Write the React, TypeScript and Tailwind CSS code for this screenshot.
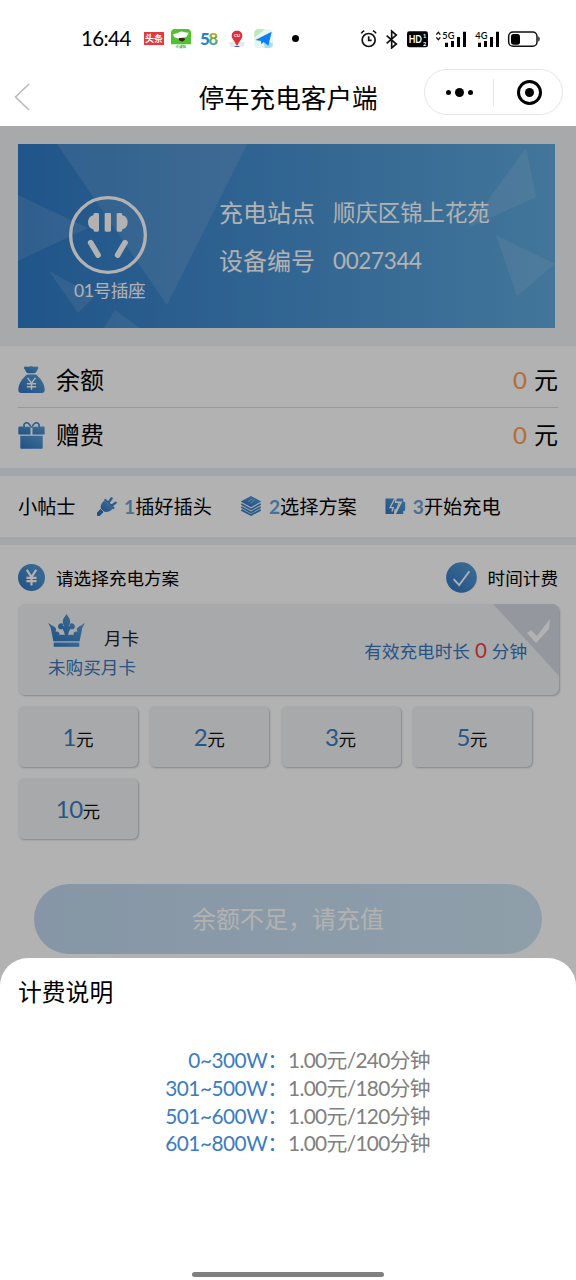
import { ReactNode } from "react";
import clsx from "clsx";

interface Rate {
  range: string;
  price: string;
}

const amounts: number[] = [1, 2, 3, 5, 10];

const rates: Rate[] = [
  { range: "0~300W", price: "1.00元/240分钟" },
  { range: "301~500W", price: "1.00元/180分钟" },
  { range: "501~600W", price: "1.00元/120分钟" },
  { range: "601~800W", price: "1.00元/100分钟" },
];

// shared gradient for the blue icons
const BlueGradient: React.FC<{ id: string }> = ({ id }) => (
  <defs>
    <linearGradient id={id} x1="0" y1="1" x2="1" y2="0">
      <stop offset="0" stopColor="#2f74bf" />
      <stop offset="1" stopColor="#5a9fd6" />
    </linearGradient>
  </defs>
);

const BagIcon = () => (
  <svg viewBox="0 0 80 82" className="h-[27px] w-[27px]">
    <BlueGradient id="bag" />
    <path
      d="M18 3c5-4 9 1 14-1 5-2 9-2 13 0 5 2 10-3 15 1 3 4-3 8-5 14-1 4-4 5-8 5H31c-4 0-7-1-8-5C22 11 15 8 18 3z"
      fill="url(#bag)"
    />
    <path
      d="M27 26h26c13 10 27 27 27 46 0 7-3 10-9 10H9c-6 0-9-3-9-10 0-19 14-36 27-46z"
      fill="url(#bag)"
    />
    <path
      d="M28 36l12 16 12-16M40 52v20M26 54h28M26 63h28"
      fill="none"
      stroke="#fff"
      strokeWidth="4.5"
    />
  </svg>
);

const GiftIcon = () => (
  <svg viewBox="0 0 80 82" className="h-[27px] w-[27px]">
    <BlueGradient id="gift" />
    <path
      d="M3 14h34v24H3a3 3 0 0 1-3-3V17a3 3 0 0 1 3-3zM43 14h34a3 3 0 0 1 3 3v18a3 3 0 0 1-3 3H43z"
      fill="url(#gift)"
    />
    <path d="M6 42h68v36a3 3 0 0 1-3 3H9a3 3 0 0 1-3-3z" fill="url(#gift)" />
    <path
      d="M38 17C37 7 27-1 20 4c-5 4-3 9-1 12M42 17C43 7 53-1 60 4c5 4 3 9 1 12"
      fill="none"
      stroke="#4787c6"
      strokeWidth="5"
    />
    <path
      d="M20 16c4-4 12-5 17 0M60 16c-4-4-12-5-17 0"
      fill="none"
      stroke="#fff"
      strokeWidth="2"
    />
  </svg>
);

const PlugIcon = () => (
  <svg viewBox="0 0 60 60" className="h-5 w-5">
    <BlueGradient id="plug" />
    <path d="M22 14C10 22 8 36 15 43c8 8 22 6 32-5z" fill="url(#plug)" />
    <path
      d="M25 12l24 24M34 20L44 7M43 30l13-10"
      stroke="#3f86c9"
      strokeWidth="7"
      strokeLinecap="round"
    />
    <path d="M17 41l-6 6" stroke="#2f74bf" strokeWidth="10" />
    <path d="M13 46l-8 8" stroke="#2f74bf" strokeWidth="13" strokeLinecap="round" />
    <path d="M12 39l9 9" stroke="#fff" strokeWidth="2.5" />
  </svg>
);

const LayersIcon = () => (
  <svg viewBox="0 0 66 62" className="h-5 w-[22px]">
    <BlueGradient id="layers" />
    <path d="M33 0l32 17-32 18L1 17z" fill="url(#layers)" />
    <path
      d="M3 25l30 17 30-17M3 34l30 17 30-17M3 43l30 16 30-16"
      fill="none"
      stroke="#3e82c4"
      strokeWidth="5.5"
    />
    <path d="M24 17l14-8M32 24l12-14" stroke="#9cc3e6" strokeWidth="2.5" />
  </svg>
);

const BatteryIcon = () => (
  <svg viewBox="0 0 64 62" className="h-5 w-[21px]">
    <BlueGradient id="battery" />
    <path d="M1 8h55v9l6 2v26l-6 2v9H1z" fill="url(#battery)" />
    <path
      d="M34 0L15 36h10l-4 12M35 2l-3 18h12L29 60l2-20"
      fill="none"
      stroke="#fff"
      strokeWidth="4"
    />
    <path d="M35 19h15L29 60" fill="none" stroke="#fff" strokeWidth="4" />
  </svg>
);

const YenIcon = () => (
  <svg viewBox="0 0 80 80" className="h-[27px] w-[27px]">
    <BlueGradient id="yen" />
    <circle cx="40" cy="40" r="40" fill="url(#yen)" />
    <path
      d="M26 17l14 22 14-22M40 38v26M25 41h30M25 51h30"
      fill="none"
      stroke="#fff"
      strokeWidth="6.5"
    />
  </svg>
);

const CheckIcon = () => (
  <svg viewBox="0 0 94 94" className="h-[31px] w-[31px]">
    <BlueGradient id="check" />
    <circle cx="47" cy="47" r="46.5" fill="url(#check)" />
    <path d="M23 52l17 18 31-42" fill="none" stroke="#fff" strokeWidth="5.5" />
  </svg>
);

const CrownIcon = () => (
  <svg viewBox="0 0 110 98" className="h-[33px] w-[37px]">
    <BlueGradient id="crown" />
    <g fill="url(#crown)">
      <path d="M55 0c5 8 11 14 11 22 0 6-3 10-5 14 4 1 5-3 3-6 7-6 17 0 16 8-1 8-9 9-13 6-3 6-6 9-7 21H50c-1-12-4-15-7-21-4 3-12 2-13-6-1-8 9-14 16-8-2 3-1 7 3 6-2-4-5-8-5-14 0-8 6-14 11-22z" />
      <path d="M0 26l13 9c10 4 14 10 9 17 9-1 14 4 12 11 8-3 14 0 21 2 7-2 13-5 21-2-2-7 3-12 12-11-5-7-1-13 9-17l13-9-8 15-8 40H16L8 41z" />
      <path d="M17 85h76v12H17z" />
    </g>
  </svg>
);

const SocketIcon = () => (
  <svg viewBox="0 0 240 240" className="h-20 w-20" fill="#fff">
    <circle cx="120" cy="120" r="112" fill="none" stroke="#fff" strokeWidth="10" />
    <rect x="110" y="54" width="19" height="56" rx="4" />
    <path d="M80 54h9q4 0 4 4v48q0 4-4 4h-9q-4 0-4-7-15-2-16-21 1-18 16-21 0-7 4-7z" />
    <path d="M159 54h-9q-4 0-4 4v48q0 4 4 4h9q4 0 4-7 15-2 16-21-1-18-16-21 0-7-4-7z" />
    <path d="M68 143l22 37M171 143l-22 37" stroke="#fff" strokeWidth="17" strokeLinecap="round" />
  </svg>
);

const StatusBar = () => (
  <div className="flex h-[68px] shrink-0 items-center pt-[9px] pl-[81px]">
    <span className="w-[50px] whitespace-nowrap text-[20.5px] leading-none tracking-[-0.6px]">
      16:44
    </span>
    <span className="ml-[13px] flex h-[13px] w-5 items-center justify-center whitespace-nowrap bg-[#e8383d] text-[9px] font-bold leading-none text-white">
      头条
    </span>
    <svg viewBox="0 0 60 60" className="ml-[7px] h-5 w-5">
      <rect width="60" height="60" rx="12" fill="#fff" />
      <path d="M12 0h36q12 0 12 12v34H0V12Q0 0 12 0z" fill="#4ec22f" />
      <path d="M6 16l14-4q10-8 20-2l13 1-6 12-11 4-7 6-10-5-9-3z" fill="#fff" />
      <path d="M23 27l17-1 2 6-8 6-10-4z" fill="#3c2415" />
      <text x="30" y="57" textAnchor="middle" fontSize="11" fontWeight="700" fill="#2c9c35">
        小虎队
      </text>
    </svg>
    <span className="ml-[9px] flex w-[17px] text-[17px] font-black leading-none tracking-[-1.5px]">
      <span className="text-[#2785c6]">5</span>
      <span className="bg-linear-to-b from-[#f08a24] via-[#6cb033] to-[#2f9fd0] bg-clip-text pr-[2px] text-transparent">
        8
      </span>
    </span>
    <svg viewBox="0 0 54 54" className="ml-[11px] h-[18px] w-[18px]">
      <path d="M2 36h50l-6 14H8z" fill="#e5e9f1" />
      <path d="M27 2c10 0 16 6 16 15 0 10-10 16-14 28h-4C21 33 11 27 11 17 11 8 17 2 27 2z" fill="#df3038" />
      <text x="27" y="22" textAnchor="middle" fontSize="13" fontWeight="700" fill="#fff">
        CU
      </text>
      <path d="M18 51q9-8 18 0z" fill="#335fb6" />
    </svg>
    <svg viewBox="0 0 60 60" className="ml-[8px] h-5 w-5">
      <rect x="1" y="1" width="56" height="56" rx="12" fill="#e6f7ee" />
      <path d="M1 26V13Q1 1 13 1h20z" fill="#b9ecb4" />
      <path d="M28 36l28 6v10q-4 6-12 5H32z" fill="#a6def8" />
      <path d="M4 33L53 8 43 50 29 39 22 46l-1-10z" fill="#117df3" />
    </svg>
    <span className="ml-[18px] h-[7px] w-[7px] rounded-full bg-black" />
    <svg viewBox="0 0 540 60" className="ml-[61px] h-5 w-[180px] shrink-0">
      <g fill="none" stroke="#111" strokeWidth="5">
        <circle cx="26" cy="33" r="19.5" />
        <path d="M26 22v12h9M4 13q3-6 9-8M39 5q6 2 9 8" />
        <path d="M80 20l29 25-14 12V6l14 12-29 25" />
      </g>
      <rect x="141" y="7" width="63" height="48" rx="7" fill="#000" />
      <text x="146" y="42" fontSize="32" fontWeight="700" fill="#fff" textLength="40" lengthAdjust="spacingAndGlyphs">
        HD
      </text>
      <text x="189" y="28" fontSize="17" fontWeight="700" fill="#fff">1</text>
      <text x="189" y="50" fontSize="17" fontWeight="700" fill="#fff">2</text>
      <path d="M229 17l6-7 6 7M229 25l6 7 6-7" fill="none" stroke="#111" strokeWidth="4" />
      <text x="247" y="30" fontSize="31" fontWeight="600" textLength="36" lengthAdjust="spacingAndGlyphs">
        5G
      </text>
      <path d="M255 41h9v13h-9zM273 36h9v18h-9zM291 24h9v30h-9zM309 8h9v46h-9z" />
      <text x="346" y="30" fontSize="31" fontWeight="600" textLength="36" lengthAdjust="spacingAndGlyphs">
        4G
      </text>
      <path d="M354 41h9v13h-9zM372 36h9v18h-9zM390 24h9v30h-9zM408 8h9v46h-9z" />
      <rect x="446" y="9" width="85" height="43" rx="13" fill="none" stroke="#111" strokeWidth="4.5" />
      <rect x="453" y="15" width="27" height="32" rx="8" />
      <path d="M535 22q4 2 4 8t-4 8z" />
    </svg>
  </div>
);

const NavBar = () => (
  <div className="relative flex h-[58px] shrink-0 items-center">
    <svg viewBox="0 0 16 28" className="ml-[14px] h-7 w-4">
      <path d="M15 1L1.5 14 15 27" fill="none" stroke="#bcbcbc" strokeWidth="1.7" />
    </svg>
    <h1 className="absolute inset-x-0 top-[14px] text-center text-[25.6px] leading-[32px]">
      停车充电客户端
    </h1>
    <div className="relative mr-[13px] mb-[10px] ml-auto flex h-[46px] w-[139px] items-center rounded-full border border-[#e6e6e6] bg-white">
      <div className="flex w-[68px] items-center justify-center gap-[4px]">
        <span className="h-[5px] w-[5px] rounded-full bg-black" />
        <span className="h-[9px] w-[9px] rounded-full bg-black" />
        <span className="h-[5px] w-[5px] rounded-full bg-black" />
      </div>
      <span className="h-[27px] w-px bg-[#e6e6e6]" />
      <div className="flex flex-1 items-center justify-center pl-[3px]">
        <span className="flex h-[25px] w-[25px] items-center justify-center rounded-full border-3 border-black">
          <span className="h-[9px] w-[9px] rounded-full bg-black" />
        </span>
      </div>
    </div>
  </div>
);

const Banner = () => (
  <div className="h-[220px] bg-[#eff2f4] pt-[18px] pl-[18px]">
    <div className="relative flex h-[184px] w-[537px] overflow-hidden bg-linear-to-r from-[#2f7ac6] to-[#60a9dc] text-white">
      <svg viewBox="0 0 537 184" className="absolute inset-0 h-full w-full">
        <g fill="#fff" fillOpacity="0.11">
          <path d="M39 0h190l-80 161z" />
          <path d="M0 51l70 33L0 117z" />
          <path d="M31 127l46 25-17 17z" />
          <path d="M97 166l25 18H86z" />
          <path d="M508 4l10 49-68 31z" />
          <path d="M478 91l59 29-38 32z" />
        </g>
      </svg>
      <div className="relative flex w-[180px] flex-col items-center pt-[51px]">
        <SocketIcon />
        <p className="mt-[4px] pl-[3px] text-[17.6px] leading-[24px] tracking-[-0.4px]">
          01号插座
        </p>
      </div>
      <div className="relative pt-[45px] pl-[21px]">
        <div className="flex h-[48px] items-center">
          <span className="w-[114px] text-[24px]">充电站点</span>
          <span className="text-[22.4px]">顺庆区锦上花苑</span>
        </div>
        <div className="flex h-[48px] items-center">
          <span className="w-[114px] text-[24px]">设备编号</span>
          <span className="text-[22.4px] tracking-[-0.3px]">0027344</span>
        </div>
      </div>
    </div>
  </div>
);

const BalanceRow: React.FC<{ icon: ReactNode; label: string; last?: boolean }> = ({
  icon,
  label,
  last,
}) => (
  <div
    className={clsx(
      "mx-[18px] flex items-center text-[24px]",
      last ? "h-[61px] pb-[7px]" : "h-[62px] border-b border-[#d9dce2] pt-[6px]"
    )}
  >
    {icon}
    <span className="ml-[11px]">{label}</span>
    <span className="ml-auto text-[#ff9c50]">0</span>
    <span className="ml-[7px]">元</span>
  </div>
);

const Step: React.FC<{ icon: ReactNode; no: number; label: string }> = ({
  icon,
  no,
  label,
}) => (
  <div className="flex items-center">
    {icon}
    <span className="ml-[7px] pt-[2px] font-bold text-[#67a3d4]">{no}</span>
    <span className="pt-[2px]">{label}</span>
  </div>
);

const MonthCard = () => (
  <div className="relative flex h-[91px] w-[541px] overflow-hidden rounded-[7px] bg-[#f0f3f5] pl-[30px] shadow-[1px_1px_2px_#b9c1ca]">
    <div className="pt-[10px]">
      <div className="flex h-[44px] items-start">
        <CrownIcon />
        <span className="mt-[12px] ml-[19px] text-[17.6px] text-[#222]">月卡</span>
      </div>
      <p className="-mt-[3px] text-[17.6px] text-[#3877bf]">未购买月卡</p>
    </div>
    <p className="mt-[30px] mr-[32px] ml-auto text-[17.6px] leading-[32px] text-[#3877bf]">
      有效充电时长<span className="mx-[5px] text-[20.5px] text-[#f43f3f]">0</span>分钟
    </p>
    <svg viewBox="0 0 66 72" className="absolute top-0 right-0 h-[72px] w-[66px]">
      <path d="M0 0h66v72z" fill="#d4dae3" />
      <path d="M34 29l4-3 6 6 13-17-1 10-13 14z" fill="#fff" />
    </svg>
  </div>
);

const RateSheet = () => (
  <div className="absolute inset-x-0 bottom-0 h-[322px] rounded-t-[28px] bg-white pt-[18px]">
    <h2 className="pl-[18px] text-[23.8px] leading-[32px]">计费说明</h2>
    <div className="mt-[38px] text-[20.8px] leading-[27.8px]">
      {rates.map((rate) => (
        <div key={rate.range} className="grid h-[27.8px] grid-cols-2">
          <span className="text-right text-[#3b7cc1]">
            <span className="tracking-[-0.5px]">{rate.range}</span>：
          </span>
          <span className="tracking-[-0.65px] text-[#808080]">{rate.price}</span>
        </div>
      ))}
    </div>
    <span className="absolute bottom-[3px] left-[192px] h-[5px] w-[192px] rounded-full bg-[#808080]" />
  </div>
);

const App = () => {
  return (
    <div
      lang="zh-CN"
      className="flex h-[1280px] w-[576px] flex-col overflow-hidden bg-white font-['Lato','Noto_Sans_CJK_SC',sans-serif] text-black"
    >
      <StatusBar />
      <NavBar />
      <main className="relative flex-1 overflow-hidden">
        <Banner />
        <section className="h-[122px]">
          <BalanceRow icon={<BagIcon />} label="余额" />
          <BalanceRow icon={<GiftIcon />} label="赠费" last />
        </section>
        <div className="h-2 bg-[#ebf0f4]" />
        <section className="flex h-[61px] items-center pl-[18px] text-[19.2px]">
          <span className="w-[79px] pt-[2px]">小帖士</span>
          <div className="flex gap-[28px]">
            <Step icon={<PlugIcon />} no={1} label="插好插头" />
            <Step icon={<LayersIcon />} no={2} label="选择方案" />
            <Step icon={<BatteryIcon />} no={3} label="开始充电" />
          </div>
        </section>
        <div className="h-2 bg-[#ebf0f4]" />
        <section className="px-[18px]">
          <div className="flex h-[59px] items-center pt-[6px] text-[17.6px]">
            <YenIcon />
            <span className="ml-[11px] pt-[3px]">请选择充电方案</span>
            <span className="mr-[11px] ml-auto">
              <CheckIcon />
            </span>
            <span className="pt-[3px]">时间计费</span>
          </div>
          <MonthCard />
          <div className="mt-[11px] flex flex-wrap gap-x-[11.3px] gap-y-[11px]">
            {amounts.map((amount) => (
              <div
                key={amount}
                className="flex h-[61px] w-[120px] items-baseline justify-center rounded-[6px] bg-[#f0f3f5] pt-[13px] shadow-[1px_1px_2px_#b9c1ca]"
              >
                <span className="text-[24px] tracking-[-0.5px] text-[#3b7cc1]">{amount}</span>
                <span className="text-[17.6px] text-[#111]">元</span>
              </div>
            ))}
          </div>
          <div className="mx-[16px] mt-[45px] flex h-[70px] items-center justify-center rounded-full bg-linear-to-r from-[#c0d7ee] to-[#cde4f4] text-[24px] text-white">
            余额不足，请充值
          </div>
        </section>
        <div className="absolute inset-0 bg-black/30" />
        <RateSheet />
      </main>
    </div>
  );
};

export default App;
